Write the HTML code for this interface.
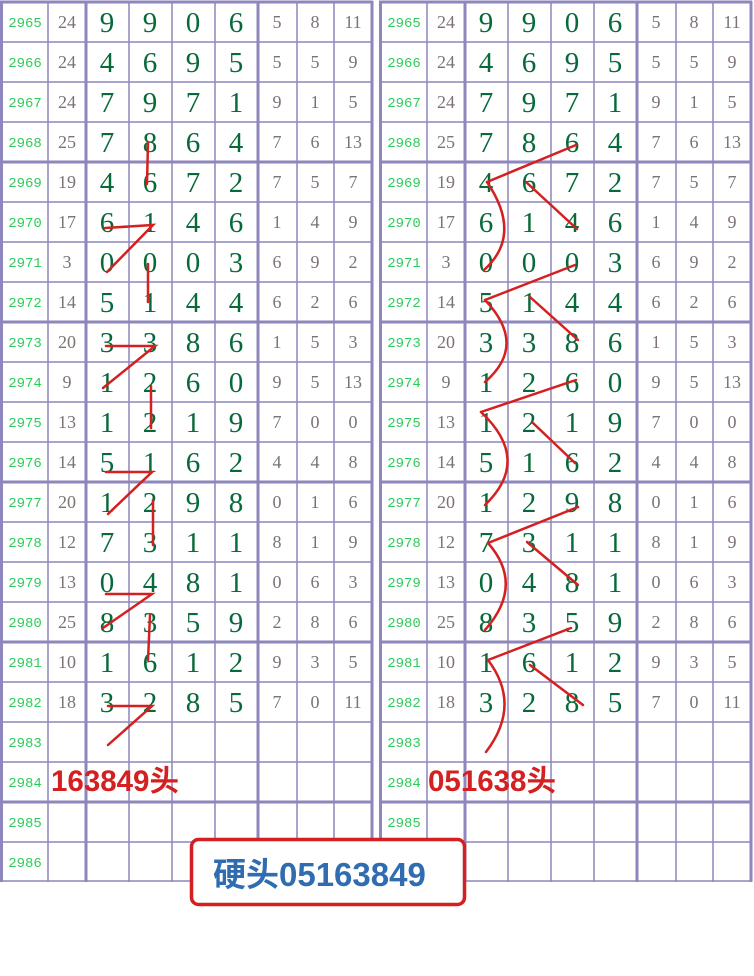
<!DOCTYPE html>
<html><head><meta charset="utf-8"><style>
html,body{margin:0;padding:0;background:#fff;width:754px;height:976px;overflow:hidden}
.p{font-family:"Liberation Mono","DejaVu Sans Mono",monospace;font-size:14px;fill:#2ecc5a;text-anchor:middle}
.s{font-family:"Liberation Serif","Noto Serif CJK SC",serif;font-size:18px;fill:#7d7370;text-anchor:middle}
.b{font-family:"Liberation Serif","Noto Serif CJK SC",serif;font-size:29px;fill:#08693a;text-anchor:middle}
.r{fill:none;stroke:#d42020;stroke-width:2.5;stroke-linecap:round}
</style></head><body>
<svg width="754" height="976" xmlns="http://www.w3.org/2000/svg">
<defs>
<g id="grid" stroke="#8e86bc">
<g stroke-width="1.5">
<line x1="48" y1="2" x2="48" y2="882"/><line x1="129" y1="2" x2="129" y2="882"/><line x1="172" y1="2" x2="172" y2="882"/><line x1="215" y1="2" x2="215" y2="882"/><line x1="297" y1="2" x2="297" y2="882"/><line x1="334" y1="2" x2="334" y2="882"/>
<line x1="0" y1="42" x2="373" y2="42"/><line x1="0" y1="82" x2="373" y2="82"/><line x1="0" y1="122" x2="373" y2="122"/>
<line x1="0" y1="202" x2="373" y2="202"/><line x1="0" y1="242" x2="373" y2="242"/><line x1="0" y1="282" x2="373" y2="282"/>
<line x1="0" y1="362" x2="373" y2="362"/><line x1="0" y1="402" x2="373" y2="402"/><line x1="0" y1="442" x2="373" y2="442"/>
<line x1="0" y1="522" x2="373" y2="522"/><line x1="0" y1="562" x2="373" y2="562"/><line x1="0" y1="602" x2="373" y2="602"/>
<line x1="0" y1="682" x2="373" y2="682"/><line x1="0" y1="722" x2="373" y2="722"/><line x1="0" y1="762" x2="373" y2="762"/>
<line x1="0" y1="842" x2="373" y2="842"/><line x1="0" y1="881" x2="373" y2="881"/>
</g>
<g stroke-width="3">
<line x1="1.5" y1="1" x2="1.5" y2="882"/><line x1="86" y1="1" x2="86" y2="882"/><line x1="258" y1="1" x2="258" y2="882"/><line x1="372" y1="1" x2="372" y2="882"/>
<line x1="0" y1="2" x2="373" y2="2"/><line x1="0" y1="162" x2="373" y2="162"/><line x1="0" y1="322" x2="373" y2="322"/><line x1="0" y1="482" x2="373" y2="482"/><line x1="0" y1="642" x2="373" y2="642"/><line x1="0" y1="802" x2="373" y2="802"/>
</g>
</g>
<g id="data">
<text class="p" x="25" y="27">2965</text><text class="s" x="67" y="28">24</text><text class="b" x="107 150 193 236" y="32">9906</text><text class="s" x="277" y="28">5</text><text class="s" x="315" y="28">8</text><text class="s" x="353" y="28">11</text>
<text class="p" x="25" y="67">2966</text><text class="s" x="67" y="68">24</text><text class="b" x="107 150 193 236" y="72">4695</text><text class="s" x="277" y="68">5</text><text class="s" x="315" y="68">5</text><text class="s" x="353" y="68">9</text>
<text class="p" x="25" y="107">2967</text><text class="s" x="67" y="108">24</text><text class="b" x="107 150 193 236" y="112">7971</text><text class="s" x="277" y="108">9</text><text class="s" x="315" y="108">1</text><text class="s" x="353" y="108">5</text>
<text class="p" x="25" y="147">2968</text><text class="s" x="67" y="148">25</text><text class="b" x="107 150 193 236" y="152">7864</text><text class="s" x="277" y="148">7</text><text class="s" x="315" y="148">6</text><text class="s" x="353" y="148">13</text>
<text class="p" x="25" y="187">2969</text><text class="s" x="67" y="188">19</text><text class="b" x="107 150 193 236" y="192">4672</text><text class="s" x="277" y="188">7</text><text class="s" x="315" y="188">5</text><text class="s" x="353" y="188">7</text>
<text class="p" x="25" y="227">2970</text><text class="s" x="67" y="228">17</text><text class="b" x="107 150 193 236" y="232">6146</text><text class="s" x="277" y="228">1</text><text class="s" x="315" y="228">4</text><text class="s" x="353" y="228">9</text>
<text class="p" x="25" y="267">2971</text><text class="s" x="67" y="268">3</text><text class="b" x="107 150 193 236" y="272">0003</text><text class="s" x="277" y="268">6</text><text class="s" x="315" y="268">9</text><text class="s" x="353" y="268">2</text>
<text class="p" x="25" y="307">2972</text><text class="s" x="67" y="308">14</text><text class="b" x="107 150 193 236" y="312">5144</text><text class="s" x="277" y="308">6</text><text class="s" x="315" y="308">2</text><text class="s" x="353" y="308">6</text>
<text class="p" x="25" y="347">2973</text><text class="s" x="67" y="348">20</text><text class="b" x="107 150 193 236" y="352">3386</text><text class="s" x="277" y="348">1</text><text class="s" x="315" y="348">5</text><text class="s" x="353" y="348">3</text>
<text class="p" x="25" y="387">2974</text><text class="s" x="67" y="388">9</text><text class="b" x="107 150 193 236" y="392">1260</text><text class="s" x="277" y="388">9</text><text class="s" x="315" y="388">5</text><text class="s" x="353" y="388">13</text>
<text class="p" x="25" y="427">2975</text><text class="s" x="67" y="428">13</text><text class="b" x="107 150 193 236" y="432">1219</text><text class="s" x="277" y="428">7</text><text class="s" x="315" y="428">0</text><text class="s" x="353" y="428">0</text>
<text class="p" x="25" y="467">2976</text><text class="s" x="67" y="468">14</text><text class="b" x="107 150 193 236" y="472">5162</text><text class="s" x="277" y="468">4</text><text class="s" x="315" y="468">4</text><text class="s" x="353" y="468">8</text>
<text class="p" x="25" y="507">2977</text><text class="s" x="67" y="508">20</text><text class="b" x="107 150 193 236" y="512">1298</text><text class="s" x="277" y="508">0</text><text class="s" x="315" y="508">1</text><text class="s" x="353" y="508">6</text>
<text class="p" x="25" y="547">2978</text><text class="s" x="67" y="548">12</text><text class="b" x="107 150 193 236" y="552">7311</text><text class="s" x="277" y="548">8</text><text class="s" x="315" y="548">1</text><text class="s" x="353" y="548">9</text>
<text class="p" x="25" y="587">2979</text><text class="s" x="67" y="588">13</text><text class="b" x="107 150 193 236" y="592">0481</text><text class="s" x="277" y="588">0</text><text class="s" x="315" y="588">6</text><text class="s" x="353" y="588">3</text>
<text class="p" x="25" y="627">2980</text><text class="s" x="67" y="628">25</text><text class="b" x="107 150 193 236" y="632">8359</text><text class="s" x="277" y="628">2</text><text class="s" x="315" y="628">8</text><text class="s" x="353" y="628">6</text>
<text class="p" x="25" y="667">2981</text><text class="s" x="67" y="668">10</text><text class="b" x="107 150 193 236" y="672">1612</text><text class="s" x="277" y="668">9</text><text class="s" x="315" y="668">3</text><text class="s" x="353" y="668">5</text>
<text class="p" x="25" y="707">2982</text><text class="s" x="67" y="708">18</text><text class="b" x="107 150 193 236" y="712">3285</text><text class="s" x="277" y="708">7</text><text class="s" x="315" y="708">0</text><text class="s" x="353" y="708">11</text>
<text class="p" x="25" y="747">2983</text>
<text class="p" x="25" y="787">2984</text>
<text class="p" x="25" y="827">2985</text>
<text class="p" x="25" y="867">2986</text>
</g>
</defs>
<use href="#grid"/><use href="#data"/>
<g transform="translate(379,0)"><use href="#grid"/><use href="#data"/></g>

<g class="r">
<polyline points="148,142 147,184"/>
<polyline points="105,228 153,225 107,272"/>
<polyline points="148,264 148,302"/>
<polyline points="106,346 155,346 103,388"/>
<polyline points="151,386 151,428"/>
<polyline points="106,472 152,472 108,514"/>
<polyline points="153,500 153,545"/>
<polyline points="106,594 152,594 103,628"/>
<polyline points="150,615 148,660"/>
<polyline points="108,706 152,706 108,745"/>
</g>
<g class="r">
<polyline points="576,145 487,182"/>
<path d="M487,182 Q523,235 484,270"/>
<polyline points="526,182 577,229"/>
<polyline points="575,265 485,300"/>
<path d="M485,300 Q528,345 485,382"/>
<polyline points="530,297 578,340"/>
<polyline points="576,380 481,412"/>
<path d="M481,412 Q532,460 485,505"/>
<polyline points="533,423 575,463"/>
<polyline points="578,507 488,543"/>
<path d="M488,543 Q525,585 485,630"/>
<polyline points="527,542 578,585"/>
<polyline points="571,628 488,660"/>
<path d="M488,660 Q522,705 486,752"/>
<polyline points="530,665 583,705"/>
</g>

<text x="51" y="791" style="font-family:'Liberation Sans','Noto Sans CJK SC',sans-serif;font-weight:bold;font-size:29.5px;fill:#d42020">163849头</text>
<text x="428" y="791" style="font-family:'Liberation Sans','Noto Sans CJK SC',sans-serif;font-weight:bold;font-size:29.5px;fill:#d42020">051638头</text>

<rect x="191.5" y="839.5" width="273" height="65" rx="7" fill="#fff" stroke="#d42020" stroke-width="3.5"/>
<text x="213" y="886" style="font-family:'Liberation Sans','Noto Sans CJK SC',sans-serif;font-weight:bold;font-size:33px;fill:#2f6cb0">硬头05163849</text>
</svg>
</body></html>
